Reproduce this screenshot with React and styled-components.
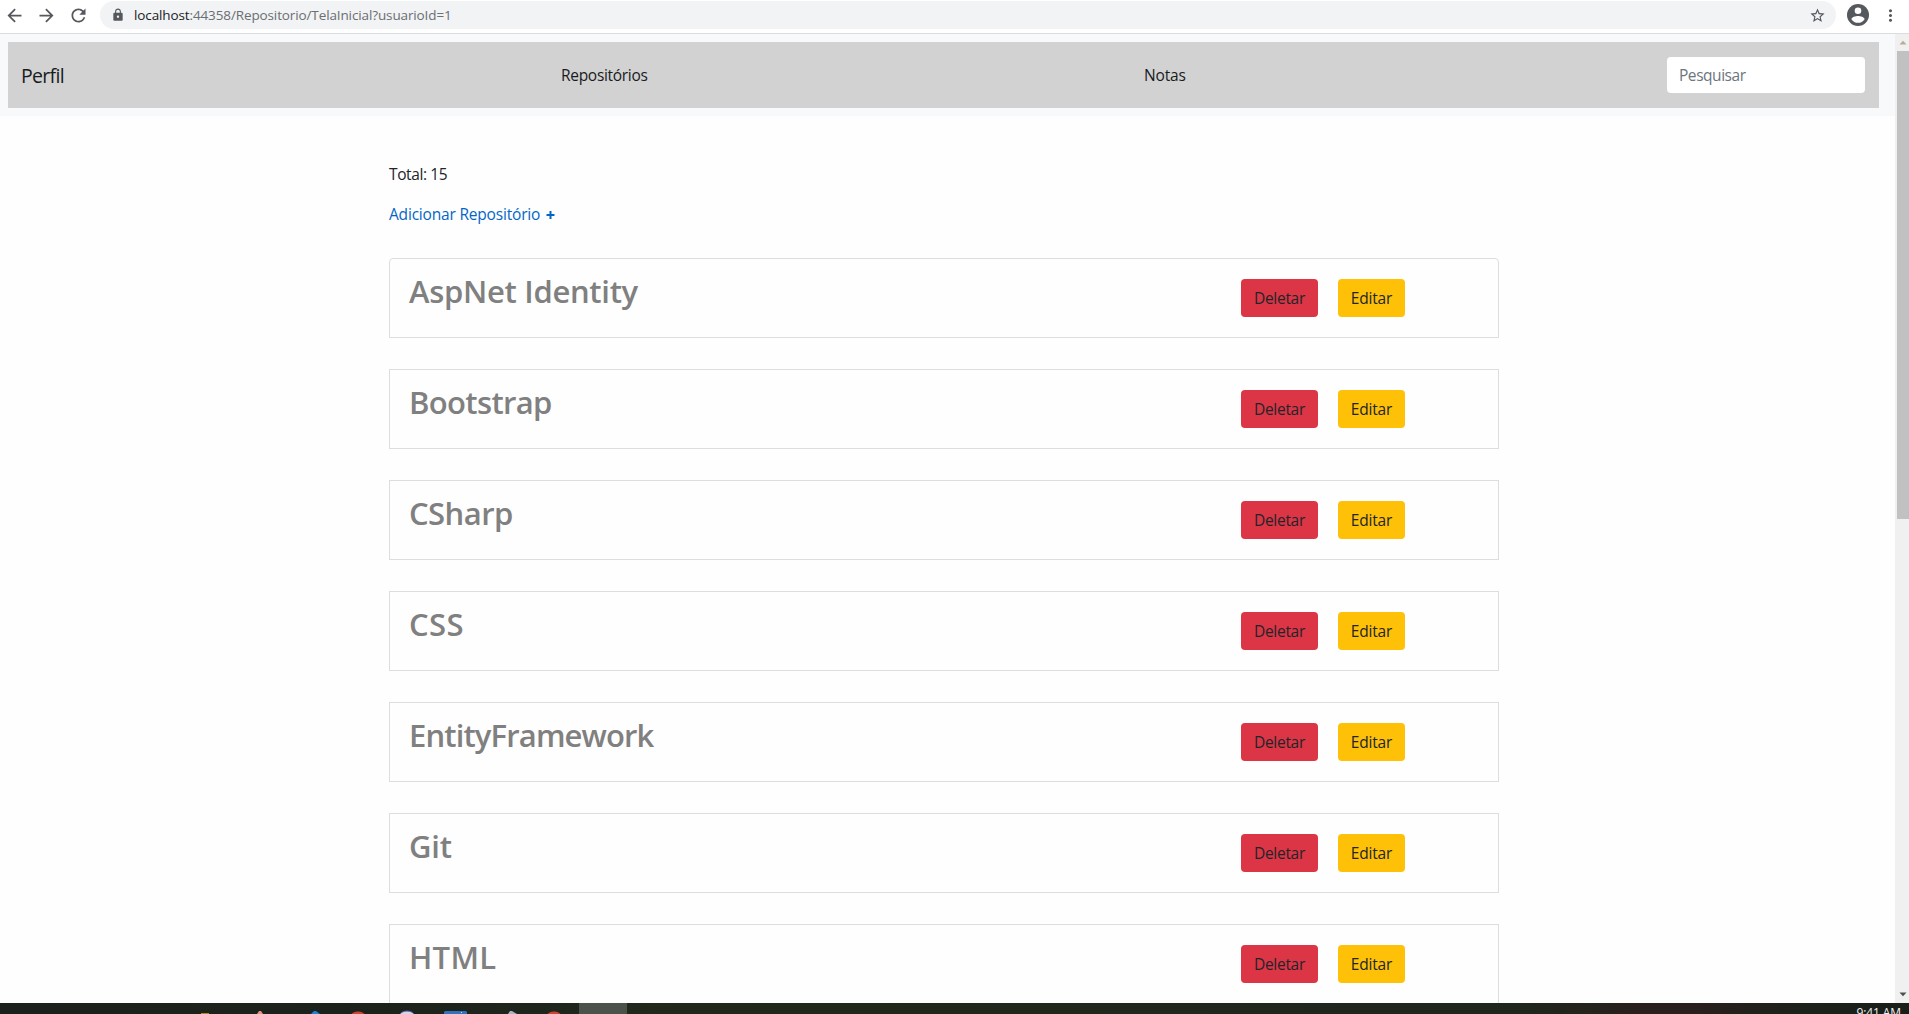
import React from "react";
import styled, { createGlobalStyle } from "styled-components";
import {
  MdArrowBack,
  MdArrowForward,
  MdRefresh,
  MdLock,
  MdStarBorder,
  MdMoreVert,
} from "react-icons/md";

const GlobalStyle = createGlobalStyle`
  *, *::before, *::after { box-sizing: border-box; }
  html, body { margin: 0; padding: 0; overflow: hidden; background: #fefefe; }
  body {
    font-family: "Open Sans", "Noto Sans", sans-serif;
    font-size: 15.5px;
    line-height: 24px;
    color: #212529;
  }
  svg { display: block; flex: none; }
`;

const Screen = styled.div`
  display: flex;
  flex-direction: column;
  width: 1909px;
  height: 1014px;
  overflow: hidden;
`;

const BrowserBar = styled.header`
  display: flex;
  align-items: flex-start;
  flex: none;
  height: 34px;
  padding: 1px 9px 0 4px;
  border-bottom: 1px solid #dadce0;
  background: #fff;
  color: #55585c;
`;

const BrowserButtons = styled.div`
  display: flex;
  gap: 11px;
  width: 96px;
  padding-top: 4px;
`;

const AddressBar = styled.div`
  display: flex;
  align-items: center;
  flex: 1;
  height: 28px;
  padding: 0 10px 0 11px;
  border-radius: 14px;
  background: #f1f3f4;
`;

const Url = styled.div`
  flex: 1;
  margin-left: 9px;
  font-size: 13.5px;
  line-height: 28px;
  letter-spacing: ${(p) => p.$spacing}px;
  color: #6b6e73;
`;

const Host = styled.span`
  color: #202124;
`;

const BrowserActions = styled.div`
  display: flex;
  align-items: center;
  gap: 12px;
  height: 28px;
  padding-left: 11px;
`;

const Viewport = styled.div`
  display: flex;
  flex: 1;
  min-height: 0;
`;

const Page = styled.div`
  flex: 1;
  min-width: 0;
  overflow: hidden;
`;

const NavBand = styled.div`
  height: 82px;
  padding: 8px 16px 8px 8px;
  background: #f8f9fa;
`;

const Nav = styled.nav`
  display: grid;
  grid-template-columns: 540px 583px 1fr auto;
  align-items: center;
  height: 66px;
  padding: 0 14px 0 13px;
  background: #d2d2d2;
  color: #191b22;
`;

const NavText = styled.a`
  padding-top: ${(p) => (p.$brand ? 1 : 0)}px;
  font-size: ${(p) => (p.$brand ? 19.5 : 15.5)}px;
  letter-spacing: ${(p) => p.$spacing}px;
  white-space: nowrap;
`;

const Search = styled.input`
  width: 198px;
  height: 36px;
  margin-top: -1px;
  padding: 1px 12px 0;
  border: 0;
  border-radius: 4px;
  background: #fff;
  font: inherit;
  letter-spacing: -0.45px;
  &::placeholder { color: #6c757d; opacity: 1; }
`;

const Content = styled.main`
  width: 1110px;
  margin: 46px 0 0 389px;
`;

const Total = styled.p`
  margin: 0 0 16px;
  letter-spacing: -0.4px;
`;

const AddLink = styled.a`
  display: flex;
  align-items: center;
  height: 24px;
  gap: 6px;
  margin-bottom: 32px;
  letter-spacing: -0.19px;
  color: #0366c6;
  svg { margin-top: 1px; }
`;

const List = styled.ul`
  display: flex;
  flex-direction: column;
  gap: 31px;
  margin: 0;
  padding: 0;
  list-style: none;
`;

const Item = styled.li`
  display: flex;
  height: 80px;
  padding: 20px 93px 0 19px;
  border: 1px solid #dddddf;
  &:first-child { border-radius: 4px 4px 0 0; }
`;

const Title = styled.h2`
  flex: 1;
  margin: -7px 0 0;
  font-size: 31px;
  line-height: 38px;
  font-weight: 600;
  letter-spacing: ${(p) => p.$spacing}px;
  color: #808080;
`;

const Button = styled.button`
  width: ${(p) => p.$width}px;
  height: 38px;
  margin-left: 20px;
  padding: 0;
  border: 0;
  border-radius: 4px;
  background: ${(p) => p.$color};
  color: #212529;
  font: inherit;
  letter-spacing: ${(p) => p.$spacing}px;
`;

const Scrollbar = styled.div`
  display: flex;
  flex-direction: column;
  align-items: flex-end;
  width: 14px;
  background: #f0f0f0;
`;

const ScrollArrow = styled.div`
  display: flex;
  justify-content: center;
  align-items: center;
  width: 12px;
  height: 17px;
`;

const Thumb = styled.div`
  width: 12px;
  height: 468px;
  margin-bottom: auto;
  background: #c0c1c0;
`;

const Taskbar = styled.footer`
  display: flex;
  justify-content: space-between;
  flex: none;
  height: 11px;
  overflow: hidden;
  background: linear-gradient(90deg, #1c201c, #1c221b 18%, #20271b 34%, #1f261b 80%, #291f1d 86%, #291f1d 89%, #1c211a 94%, #191e19);
`;

const Clock = styled.span`
  height: 20px;
  margin: 0 8px 0 0;
  font: 12px/20px "Open Sans", sans-serif;
  letter-spacing: -0.1px;
  color: #f2f2f2;
`;

const repositories = [
  ["AspNet Identity", -0.3],
  ["Bootstrap", -0.65],
  ["CSharp", -0.55],
  ["CSS", 0.4],
  ["EntityFramework", -0.86],
  ["Git", -0.2],
  ["HTML", 0.3],
];

export default function App() {
  return (
    <Screen>
      <GlobalStyle />
      <BrowserBar>
        <BrowserButtons>
          <MdArrowBack size={21} />
          <MdArrowForward size={21} />
          <MdRefresh size={21} />
        </BrowserButtons>
        <AddressBar>
          <MdLock size={14} />
          <Url $spacing={-0.12}>
            <Host>localhost</Host>:44358/Repositorio/TelaInicial?usuarioId=1
          </Url>
          <MdStarBorder size={17} />
        </AddressBar>
        <BrowserActions>
          <svg width="22" height="22" viewBox="0 0 22 22">
            <circle cx="11" cy="11" r="11" fill="currentColor" />
            <circle cx="11" cy="6.700" r="3.300" fill="#fff" />
            <path d="M4.400 15.300c0-2.200 4.400-3.400 6.600-3.400s6.600 1.200 6.600 3.400a7.920 7.920 0 0 1-13.200 0z" fill="#fff" />
          </svg>
          <MdMoreVert size={19} />
        </BrowserActions>
      </BrowserBar>
      <Viewport>
        <Page>
          <NavBand>
            <Nav>
              <NavText $brand $spacing={-0.7}>Perfil</NavText>
              <NavText $spacing={-0.3}>Repositórios</NavText>
              <NavText $spacing={-0.15}>Notas</NavText>
              <Search placeholder="Pesquisar" />
            </Nav>
          </NavBand>
          <Content>
            <Total>Total: 15</Total>
            <AddLink>
              Adicionar Repositório
              <svg width="9" height="9" viewBox="0 0 9 9">
                <path d="M4.500 1v8M.5 5h8" stroke="currentColor" strokeWidth="2" fill="none" />
              </svg>
            </AddLink>
            <List>
              {repositories.map(([name, spacing]) => (
                <Item key={name}>
                  <Title $spacing={spacing}>{name}</Title>
                  <Button $width={77} $color="#dc3545" $spacing={-0.3}>Deletar</Button>
                  <Button $width={67} $color="#ffc107" $spacing={-0.2}>Editar</Button>
                </Item>
              ))}
            </List>
          </Content>
        </Page>
        <Scrollbar>
          <ScrollArrow>
            <svg width="8" height="5" viewBox="0 0 8 5"><path d="M.5 4.500 4 .8l3.500 3.700z" fill="#bcaa98" /></svg>
          </ScrollArrow>
          <Thumb />
          <ScrollArrow>
            <svg width="8" height="5" viewBox="0 0 8 5"><path d="M.5.5h7L4 4.200z" fill="#4d504d" /></svg>
          </ScrollArrow>
        </Scrollbar>
      </Viewport>
      <Taskbar>
        <svg width="640" height="11" viewBox="0 0 640 11">
          <path d="M579 0h48v11h-48z" fill="#4b5249" />
          <path d="M201 10h8v1h-8z" fill="#ad8d16" />
          <path d="m257 11 2-3h2l2 3z" fill="#e9957e" />
          <path d="m311 11 3-3h2l4 3z" fill="#1c83dc" />
          <ellipse cx="358" cy="12.500" rx="7" ry="4" fill="#cf4437" />
          <ellipse cx="407" cy="12" rx="7" ry="4" fill="#d6d4e8" stroke="#55539b" />
          <path d="M444 11V9l1-1h21l1 1v2z" fill="#3371bd" />
          <path d="M461 9h1v1h-1z" fill="#d9e4f2" />
          <path d="m508 11 2-3h2l5 3z" fill="#a9b3c4" />
          <ellipse cx="554" cy="12.500" rx="7" ry="4" fill="#cf4437" />
        </svg>
        <Clock>9:41 AM</Clock>
      </Taskbar>
    </Screen>
  );
}
